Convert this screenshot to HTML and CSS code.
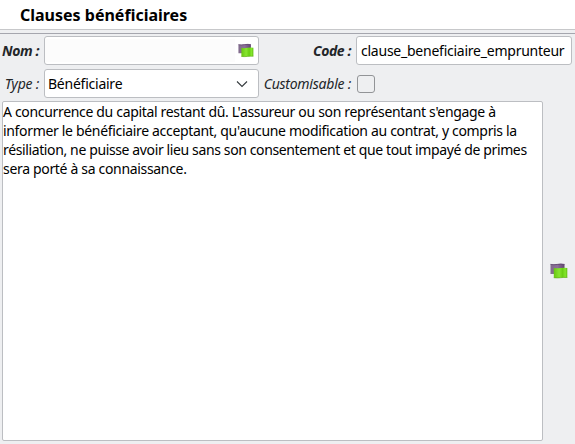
FILE: index.html
```html
<!DOCTYPE html>
<html lang="fr">
<head>
<meta charset="utf-8">
<title>Clauses bénéficiaires</title>
<link rel="stylesheet" href="styles.css">
</head>
<body>
<svg class="defs" width="0" height="0">
  <defs>
    <linearGradient id="back" x1="0" x2="1" y1="0" y2="0"><stop offset="0" stop-color="#806b8c"/><stop offset=".5" stop-color="#8c7098"/><stop offset="1" stop-color="#604470"/></linearGradient>
    <linearGradient id="front" x1="0" x2="1" y1="0" y2="0"><stop offset="0" stop-color="#69c512"/><stop offset=".4" stop-color="#86e52e"/><stop offset=".65" stop-color="#69ce12"/><stop offset=".85" stop-color="#83e62c"/><stop offset="1" stop-color="#62bd12"/></linearGradient>
    <symbol id="translate" viewBox="0 0 18 16">
      <path d="M.5 1.2Q4 1.8 7.5 1.1T14.5 1.2V11H.5Z" fill="url(#back)"/>
      <path d="M.5 1.4Q4 2 7.5 1.4T14.5 1.4" fill="none" stroke="#5d416c" stroke-width=".8"/>
      <path d="M3.8 5Q7 5.7 10.5 5T17.3 5V14.5Q13.5 14.2 10.5 14.7T3.8 14.7Z" fill="url(#front)"/>
      <path d="M3.8 14.7Q7.5 15.1 10.5 14.7T17.3 14.5" fill="none" stroke="#62ad1c" stroke-width=".7"/>
    </symbol>
  </defs>
</svg>
<header class="title">Clauses bénéficiaires</header>
<div class="rule"></div>
<main class="form">
  <div class="row">
    <span class="label required">Nom :</span>
    <div class="field name"><span class="inner"></span><svg class="icon small"><use href="#translate"/></svg></div>
    <span class="label required second">Code :</span>
    <div class="field code">clause_beneficiaire_emprunteur</div>
  </div>
  <div class="row">
    <span class="label">Type :</span>
    <div class="field type"><span>Bénéficiaire</span><svg class="chevron" viewBox="0 0 12 8"><path d="M1 1.5L6 6.5L11 1.5" fill="none" stroke="#343a3d" stroke-width="1.1"/></svg></div>
    <span class="label second">Customisable :</span>
    <span class="check"></span>
  </div>
  <div class="content">
    <div class="text">
      <div class="line">A concurrence du capital restant dû. L'assureur ou son représentant s'engage à</div>
      <div class="line">informer le bénéficiaire acceptant, qu'aucune modification au contrat, y compris la</div>
      <div class="line tight">résiliation, ne puisse avoir lieu sans son consentement et que tout impayé de primes</div>
      <div class="line">sera porté à sa connaissance.</div>
    </div>
    <svg class="icon"><use href="#translate"/></svg>
  </div>
</main>
</body>
</html>
```
FILE: styles.css
```css
* { box-sizing: border-box; }
body {
  margin: 0;
  width: 575px;
  height: 444px;
  overflow: hidden;
  background: #eeeff1;
  color: #000;
  font: 14px/19px "Noto Sans", sans-serif;
  letter-spacing: -.24px;
}
.defs { display: block; width: 0; height: 0; }
.title {
  height: 29px;
  padding-left: 20px;
  background: #fff;
  font-size: 16px;
  font-weight: 700;
  line-height: 30px;
  letter-spacing: 0;
}
.rule {
  height: 5px;
  border-top: 1px solid #c7c8ca;
  border-bottom: 1px solid #a5a6ae;
}
.form { padding: 2px 3px 0 2px; }
.row { display: flex; align-items: center; height: 29px; margin-bottom: 4px; }
.label {
  width: 42px;
  padding-right: 5px;
  color: #232629;
  font-style: italic;
  text-align: right;
  white-space: nowrap;
}
.required { font-weight: 700; letter-spacing: -.42px; }
.second { width: 97px; }
.field {
  display: flex;
  align-items: center;
  height: 29px;
  border: 1px solid #bcbec2;
  border-radius: 3px;
  background: #fff;
}
.name, .type { width: 215px; }
.name { justify-content: space-between; padding-right: 4px; }
.inner { width: 190px; height: 23px; background: #fcfcfc; }
.icon { display: block; width: 18px; height: 16px; flex: none; }
.small { width: 16px; height: 15px; }
.code { width: 216px; padding-left: 4px; white-space: nowrap; }
.type { justify-content: space-between; padding: 0 10px 0 3px; }
.chevron { width: 12px; height: 8px; }
.check {
  width: 18px;
  height: 18px;
  margin-left: 1px;
  border: 1px solid #929497;
  border-radius: 3px;
}
.content { display: flex; align-items: center; margin-top: -1px; }
.text {
  width: 541px;
  height: 340px;
  margin-right: 7px;
  border: 1px solid #bcbec2;
  border-radius: 2px;
  background: #fff;
  white-space: nowrap;
}
.line { letter-spacing: -.325px; }
.tight { letter-spacing: -.375px; }
```
